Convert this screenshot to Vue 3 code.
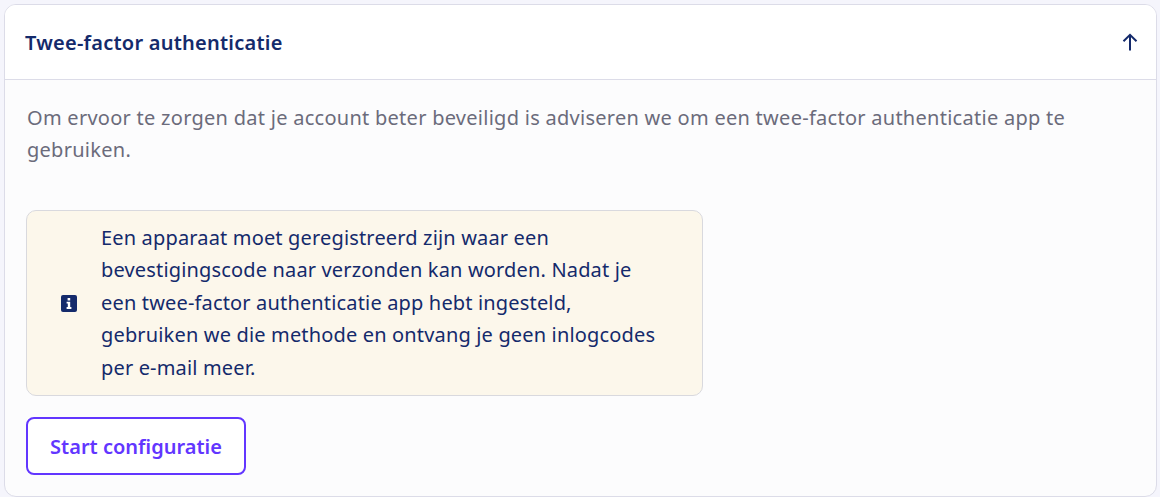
<template>
  <div class="page">
    <section class="card">
      <header class="head">
        <h2>Twee-factor authenticatie</h2>
        <svg class="arrow" width="16" height="18" viewBox="0 0 16 18" fill="none" stroke="currentColor" stroke-width="2">
          <path d="M8 17.5V2M1.5 8.3 8 1.8 14.5 8.3" />
        </svg>
      </header>
      <div class="body">
        <p class="intro">Om ervoor te zorgen dat je account beter beveiligd is adviseren we om een twee-factor authenticatie app te gebruiken.</p>
        <div class="notice">
          <svg class="info" width="16" height="17" viewBox="0 0 16 17">
            <rect width="16" height="17" rx="2" fill="#142a6b" />
            <path d="M6.6 3h2.6v2.4H6.6zM5.6 6.8h3.6v5.2h1.2v2H5.6v-2h1.2V8.6H5.6z" fill="#fff" />
          </svg>
          <p>Een apparaat moet geregistreerd zijn waar een bevestigingscode naar verzonden kan worden. Nadat je een twee-factor authenticatie app hebt ingesteld, gebruiken we die methode en ontvang je geen inlogcodes per e-mail meer.</p>
        </div>
        <button class="start" type="button">Start configuratie</button>
      </div>
    </section>
  </div>
</template>

<script setup>
</script>

<style>
html, body { margin: 0; background: #f5f5fc; }
</style>

<style scoped>
.page {
  box-sizing: border-box;
  width: 1160px;
  height: 497px;
  padding: 4px 3px 0 4px;
  overflow: hidden;
  background: #f5f5fc;
  font-family: "Noto Sans", "Liberation Sans", sans-serif;
}
.card {
  box-sizing: border-box;
  height: 493px;
  border: 1px solid #dcdce8;
  border-radius: 12px;
  background: #fcfcfd;
  overflow: hidden;
}
.head {
  box-sizing: border-box;
  height: 75px;
  display: flex;
  align-items: center;
  justify-content: space-between;
  padding: 0 18px 0 20px;
  background: #fff;
  border-bottom: 1px solid #dcdce8;
  color: #142a6b;
}
h2 {
  margin: 0;
  font-size: 20px;
  font-weight: 600;
  letter-spacing: 0.24px;
  color: #142a6b;
}
.arrow { display: block; }
.body { padding: 22px 21px 0 21px; }
.intro {
  margin: 0 0 44px;
  padding-left: 1px;
  font-size: 20px;
  line-height: 32px;
  letter-spacing: 0.27px;
  color: #6b6b7b;
}
.notice {
  box-sizing: border-box;
  width: 677px;
  height: 186px;
  display: flex;
  align-items: center;
  gap: 24px;
  padding: 0 44px 0 34px;
  background: #fcf7eb;
  border: 1px solid #d9d9de;
  border-radius: 10px;
}
.info { flex: none; }
.notice p {
  margin: 0;
  font-size: 20px;
  line-height: 32.5px;
  letter-spacing: 0.16px;
  color: #142a6b;
}
.start {
  display: block;
  box-sizing: border-box;
  width: 220px;
  height: 58px;
  margin-top: 21px;
  padding: 0;
  background: #fff;
  border: 2px solid #6236ff;
  border-radius: 8px;
  color: #6236ff;
  font: 600 20px "Noto Sans", "Liberation Sans", sans-serif;
}
</style>
